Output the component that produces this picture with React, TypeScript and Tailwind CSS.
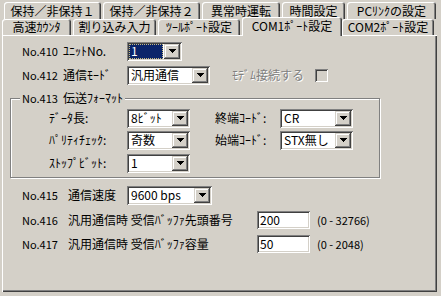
import React from "react";

const FONT = "font-['Noto_Sans_CJK_JP',sans-serif]";
const sunken =
  "shadow-[inset_1px_1px_0_#808080,inset_-1px_-1px_0_#ffffff,inset_2px_2px_0_#404040,inset_-2px_-2px_0_#d4d0c8]";
const raised =
  "shadow-[inset_-1px_-1px_0_#404040,inset_1px_1px_0_#d4d0c8,inset_-2px_-2px_0_#808080,inset_2px_2px_0_#ffffff]";
const tabEdge = "shadow-[inset_1px_1px_0_#ffffff,inset_-1px_0_0_#404040,inset_-2px_0_0_#808080]";

// little black combo arrow, drawn pixel by pixel
const Arrow = () => (
  <svg width="7" height="4" viewBox="0 0 7 4" shapeRendering="crispEdges">
    <rect x="0" y="0" width="7" height="1" fill="#000" />
    <rect x="1" y="1" width="5" height="1" fill="#000" />
    <rect x="2" y="2" width="3" height="1" fill="#000" />
    <rect x="3" y="3" width="1" height="1" fill="#000" />
  </svg>
);

const Combo = ({ w, value, focused }: { w: string; value: string; focused?: boolean }) => (
  <div className={`flex h-[19px] shrink-0 ${w} bg-white p-[2px] ${sunken}`}>
    <div className="flex min-w-0 flex-1 items-center pr-[1px]">
      {focused ? (
        <span className="flex h-full w-full items-center border border-dotted border-[#c8bc80] bg-[#0a246a] pl-[1px] text-white">
          {value}
        </span>
      ) : (
        <span className="pl-[2px]">{value}</span>
      )}
    </div>
    <div className={`flex w-[16px] items-center justify-center bg-[#d4d0c8] ${raised}`}>
      <Arrow />
    </div>
  </div>
);

const Field = ({ value }: { value: string }) => (
  <div className={`flex h-[18px] w-[53px] shrink-0 items-center bg-white pl-[3px] ${sunken}`}>{value}</div>
);

const Tab = ({ w, label, className = "" }: { w: string; label: string; className?: string }) => (
  <div
    className={`flex h-full shrink-0 ${w} items-center justify-center rounded-t-[3px] bg-[#d4d0c8] ${tabEdge} ${className}`}
  >
    {label}
  </div>
);

// "No.4xx" numbers are narrower in the original UI font
const No = ({ n, w }: { n: string; w: string }) => <span className={`${w} shrink-0 text-[11px]`}>No.{n}</span>;

export default function App() {
  return (
    <div className={`h-[296px] w-[441px] overflow-hidden bg-[#d4d0c8] text-[12px] leading-[14px] text-black ${FONT}`}>
      {/* back row of tabs */}
      <div className="mt-[2px] flex h-[17px] gap-[2px] pl-[4px]">
        <Tab w="w-[97px]" label="保持／非保持１" />
        <Tab w="w-[97px]" label="保持／非保持２" />
        <Tab w="w-[78px]" label="異常時運転" />
        <Tab w="w-[63px]" label="時間設定" />
        <Tab w="w-[89px]" label="PCﾘﾝｸの設定" />
      </div>

      {/* front row of tabs */}
      <div className="flex h-[16px] pl-[2px]">
        <Tab w="w-[69px]" label="高速ｶｳﾝﾀ" />
        <Tab w="w-[83px]" label="割り込み入力" className="ml-[2px]" />
        <Tab w="w-[82px]" label="ﾂｰﾙﾎﾟｰﾄ設定" className="ml-[2px]" />
        <div
          className={`relative z-10 -mt-[2px] ml-[2px] flex h-[19px] w-[100px] shrink-0 items-start justify-center rounded-t-[3px] bg-[#d4d0c8] pt-[2px] ${tabEdge}`}
        >
          COM1ﾎﾟｰﾄ設定
        </div>
        <Tab w="w-[92px]" label="COM2ﾎﾟｰﾄ設定" />
      </div>

      {/* page */}
      <div className="relative ml-[2px] flex h-[257px] w-[435px] flex-col pt-[7px] shadow-[inset_1px_1px_0_#ffffff,inset_-1px_-1px_0_#404040,inset_-2px_-2px_0_#808080]">
        <div className="flex h-[18px] items-center pl-[20px]">
          <No n="410" w="w-[41px]" />
          <span className="w-[64px]">ﾕﾆｯﾄNo.</span>
          <Combo w="w-[55px]" value="1" focused />
        </div>

        <div className="mt-[6px] flex h-[18px] items-center pl-[20px]">
          <No n="412" w="w-[41px]" />
          <span className="w-[64px]">通信ﾓｰﾄﾞ</span>
          <Combo w="w-[83px]" value="汎用通信" />
          <span className="ml-[22px] text-[#808080] [text-shadow:1px_1px_0_#ffffff]">ﾓﾃﾞﾑ接続する</span>
          <div className={`ml-[11px] h-[13px] w-[13px] bg-[#d4d0c8] ${sunken}`} />
        </div>

        <fieldset className="mt-[7px] ml-[8px] w-[370px] border border-[#808080] pb-[5px] shadow-[inset_1px_1px_0_#ffffff,1px_1px_0_#ffffff]">
          <legend className="ml-[9px] bg-[#d4d0c8] px-[2px]">
            <span className="inline-block w-[41px] text-[11px]">No.413</span>伝送ﾌｫｰﾏｯﾄ
          </legend>
          <div className="mt-[4px] flex h-[18px] items-center pl-[38px]">
            <span className="w-[78px]">ﾃﾞｰﾀ長:</span>
            <Combo w="w-[63px]" value="8ﾋﾞｯﾄ" />
            <span className="ml-[25px] w-[65px]">終端ｺｰﾄﾞ:</span>
            <Combo w="w-[73px]" value="CR" />
          </div>
          <div className="mt-[4px] flex h-[18px] items-center pl-[38px]">
            <span className="w-[78px]">ﾊﾟﾘﾃｨﾁｪｯｸ:</span>
            <Combo w="w-[63px]" value="奇数" />
            <span className="ml-[25px] w-[65px]">始端ｺｰﾄﾞ:</span>
            <Combo w="w-[73px]" value="STX無し" />
          </div>
          <div className="mt-[5px] flex h-[18px] items-center pl-[38px]">
            <span className="w-[78px]">ｽﾄｯﾌﾟﾋﾞｯﾄ:</span>
            <Combo w="w-[63px]" value="1" />
          </div>
        </fieldset>

        <div className="mt-[8px] flex h-[18px] items-center pl-[20px]">
          <No n="415" w="w-[46px]" />
          <span className="w-[59px]">通信速度</span>
          <Combo w="w-[85px]" value="9600 bps" />
        </div>

        <div className="mt-[7px] flex h-[18px] items-center pl-[20px]">
          <No n="416" w="w-[46px]" />
          <span className="w-[189px]">汎用通信時 受信ﾊﾞｯﾌｧ先頭番号</span>
          <Field value="200" />
          <span className="ml-[7px] text-[11px]">(0 - 32766)</span>
        </div>

        <div className="mt-[6px] flex h-[18px] items-center pl-[20px]">
          <No n="417" w="w-[46px]" />
          <span className="w-[189px]">汎用通信時 受信ﾊﾞｯﾌｧ容量</span>
          <Field value="50" />
          <span className="ml-[7px] text-[11px]">(0 - 2048)</span>
        </div>
      </div>
    </div>
  );
}
